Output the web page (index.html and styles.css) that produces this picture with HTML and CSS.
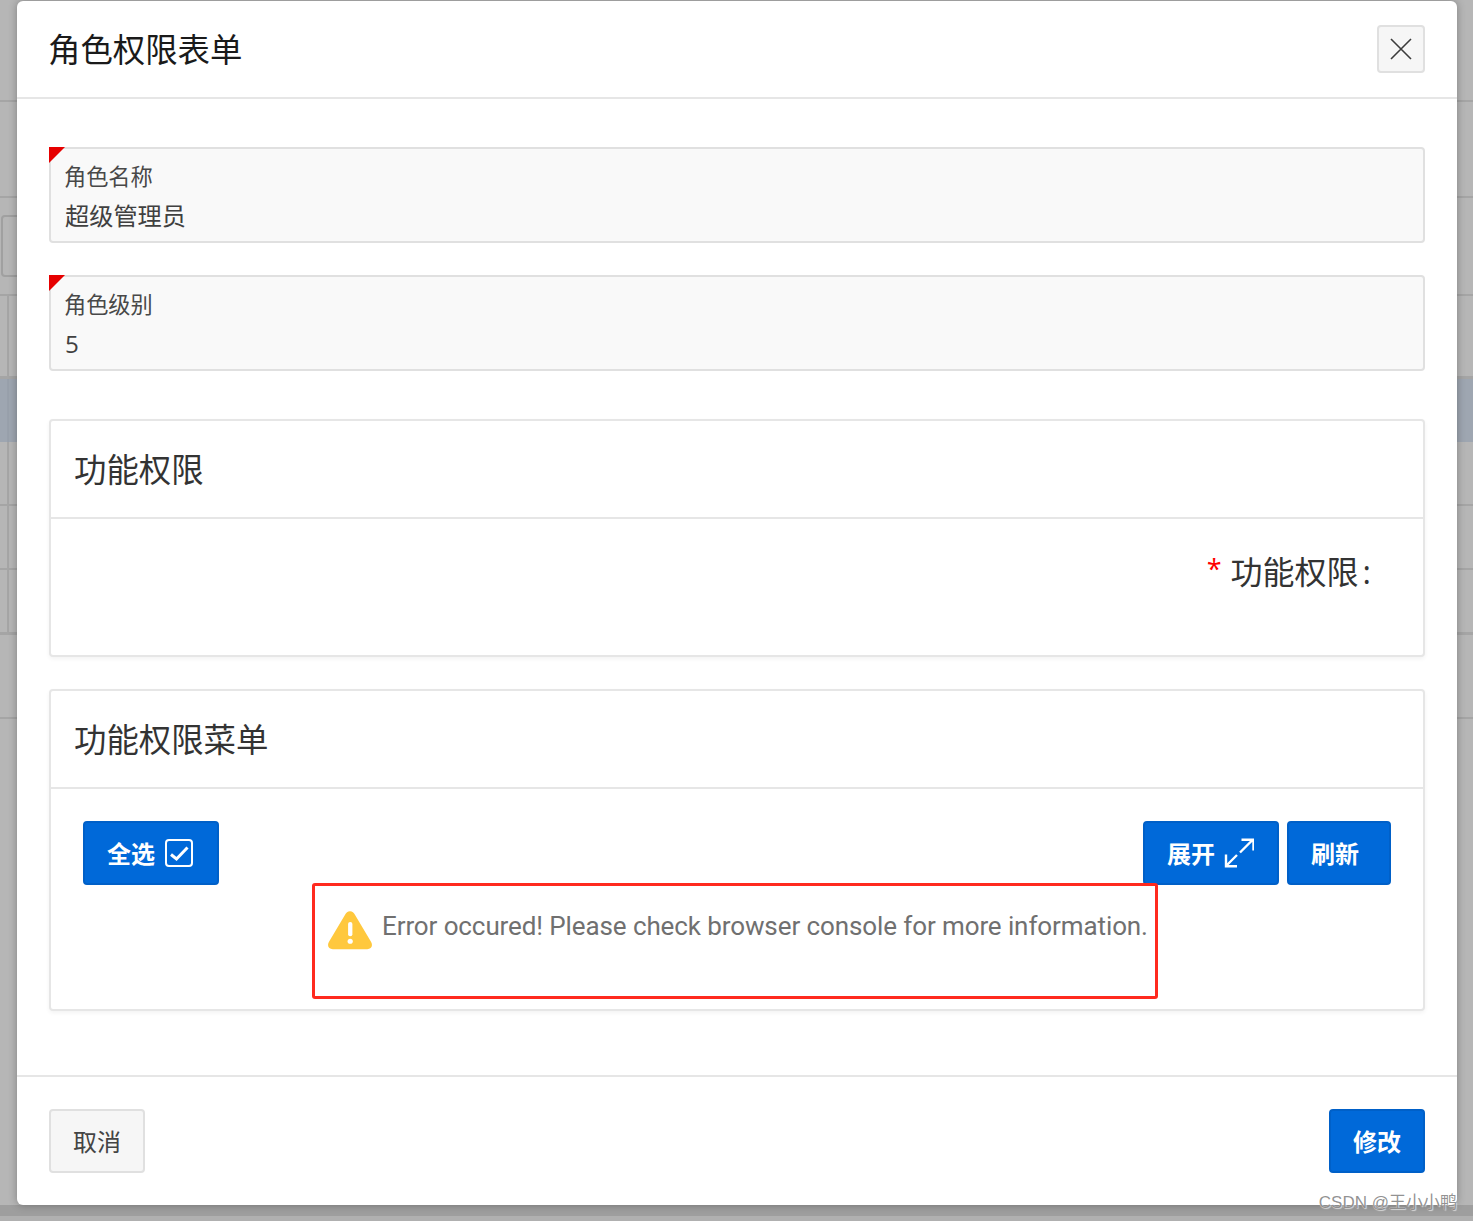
FILE: index.html
```html
<!DOCTYPE html>
<html lang="zh-CN">
<head>
<meta charset="utf-8">
<title>角色权限表单</title>
<link rel="stylesheet" href="styles.css">
</head>
<body>
<div class="backdrop">
  <div class="bd-row r1"></div>
  <div class="bd-row r2"></div>
  <div class="bd-row r3"><span class="bd-btn"></span></div>
  <div class="bd-row r4 cols"></div>
  <div class="bd-row r5 band"></div>
  <div class="bd-row r6 cols"></div>
  <div class="bd-row r6 cols"></div>
  <div class="bd-row r7 cols"></div>
  <div class="bd-row r8"></div>
  <div class="bd-row r9"></div>
</div>
<main class="modal">
  <header class="modal-head">
    <h1 class="modal-title">角色权限表单</h1>
    <button class="close" type="button" aria-label="关闭">
      <svg width="22" height="22" viewBox="0 0 22 22"><path d="M1 1 21 21M21 1 1 21" fill="none" stroke="#3c3c3c" stroke-width="1.6"/></svg>
    </button>
  </header>
  <section class="modal-body">
    <div class="field">
      <label class="field-label">角色名称</label>
      <div class="field-value">超级管理员</div>
    </div>
    <div class="field">
      <label class="field-label">角色级别</label>
      <div class="field-value">5</div>
    </div>
    <div class="card card-a">
      <div class="card-head">功能权限</div>
      <div class="card-body form-row">
        <span class="req">*</span><span class="form-label">功能权限</span><span class="colon">:</span>
      </div>
    </div>
    <div class="card card-b">
      <div class="card-head">功能权限菜单</div>
      <div class="card-body">
        <div class="toolbar">
          <button class="btn primary btn-tool btn-select" type="button">全选
            <svg class="ico ico-check" width="28" height="28" viewBox="0 0 28 28"><rect x="1" y="1" width="26" height="26" rx="3" fill="none" stroke="#fff" stroke-width="2"/><path d="M6 15.500 11.500 20 22.500 8.500" fill="none" stroke="#fff" stroke-width="3"/></svg>
          </button>
          <div class="toolbar-right">
            <button class="btn primary btn-tool btn-expand" type="button">展开
              <svg class="ico ico-expand" width="30" height="30" viewBox="0 0 30 30"><path d="M16 14.500 28.500 2M17.500 1.800H29.500V12.500M2 28 13 17M2 16.500V28.200H13" fill="none" stroke="#fff" stroke-width="2.400"/></svg>
            </button>
            <button class="btn primary btn-tool btn-refresh" type="button">刷新</button>
          </div>
        </div>
        <div class="error">
          <svg class="warn" width="44" height="39" viewBox="0 0 46 40"><path d="M23 0C20.500 0 19 1.500 18 3.200L1.200 31.500C-1.500 36 .8 39.500 5 39.500H41C45.200 39.500 47.500 36 44.800 31.500L28 3.200C27 1.500 25.500 0 23 0Z" fill="#ffc83d"/><rect x="21" y="11" width="4.500" height="15" rx="2.200" fill="#fff"/><circle cx="23.200" cy="31.200" r="2.700" fill="#fff"/></svg>
          <span class="error-text">Error occured! Please check browser console for more information.</span>
        </div>
      </div>
    </div>
  </section>
  <footer class="modal-foot">
    <button class="btn default" type="button">取消</button>
    <button class="btn primary" type="button">修改</button>
  </footer>
</main>
<div class="watermark">CSDN @王小小鸭</div>
</body>
</html>
```
FILE: styles.css
```css
* { box-sizing: border-box; }
html, body { margin: 0; height: 1221px; overflow: hidden; }
body {
  position: relative;
  width: 1473px;
  background: #b6b6b6;
  padding: 1px 16px 0 17px;
  font-family: "Open Sans", "Noto Sans CJK SC", sans-serif;
  color: #333;
}
.backdrop { position: absolute; inset: 0; display: flex; flex-direction: column; }
.bd-row { border-bottom: 2px solid #a5a5a5; position: relative; }
.r1 { height: 102px; }
.r2 { height: 96px; }
.r3 { height: 98px; }
.r4 { height: 80px; border-bottom-width: 0; }
.r5 { height: 66px; background: #9ea6b1; border-bottom: 0; border-top: 3px solid #a5a5a5; }
.r6 { height: 64px; }
.r7 { height: 65px; border-bottom-width: 3px; }
.r8 { height: 84px; }
.r9 { flex: 1; border-bottom: 0; background: linear-gradient(#b6b6b6 0 486px, #9e9e9e 486px 497px, #b0b0b0 497px); }
.cols { background: linear-gradient(90deg, transparent 7px, #a5a5a5 7px 9px, transparent 9px); }
.band { background: linear-gradient(90deg, #9ea6b1 7px, #98a0ab 7px 9px, #9ea6b1 9px); }
.bd-btn {
  position: absolute; left: 1px; top: 17px; width: 30px; height: 62px;
  border: 2px solid #a0a0a0; border-radius: 4px;
}
.modal {
  position: relative;
  width: 1440px;
  height: 1204px;
  background: #fff;
  border-radius: 6px;
  display: flex;
  flex-direction: column;
  box-shadow: 0 0 8px rgba(0,0,0,.3);
}
.modal-head {
  height: 98px;
  padding: 0 32px;
  display: flex;
  align-items: center;
  justify-content: space-between;
  border-bottom: 2px solid #e6e6e6;
}
.modal-title { margin: 0 0 0 -1px; font-size: 32.4px; font-weight: 400; color: #1a1a1a; line-height: 96px; }
.close {
  width: 48px; height: 48px;
  padding: 0;
  display: flex; align-items: center; justify-content: center;
  background: #f6f6f6;
  border: 2px solid #e0e0e0;
  border-radius: 4px;
}
.modal-body { flex: 1; padding: 48px 32px 0; }
.field {
  position: relative;
  height: 96px;
  margin-bottom: 32px;
  padding: 12px 14px 0;
  background: #f9f9f9;
  border: 2px solid #e0e0e0;
  border-radius: 4px;
}
.field::before {
  content: "";
  position: absolute;
  left: -2px; top: -2px;
  border-style: solid;
  border-width: 16px 16px 0 0;
  border-color: #e60000 transparent transparent transparent;
}
.field-label { display: block; margin-left: -1px; font-size: 22.2px; line-height: 32px; color: #484848; }
.field-value { margin-top: 1px; font-size: 24.2px; line-height: 44px; color: #404040; }
.card {
  border: 2px solid #e6e6e6;
  border-radius: 4px;
  background: #fff;
  box-shadow: 0 2px 4px rgba(0,0,0,.05);
}
.card-a { height: 238px; margin: 48px 0 32px; }
.card-b { height: 322px; }
.card-head {
  height: 98px;
  padding: 0 23px 4px;
  display: flex;
  align-items: center;
  font-size: 32.4px;
  color: #333;
  border-bottom: 2px solid #e6e6e6;
}
.form-row {
  display: flex;
  justify-content: flex-end;
  align-items: flex-start;
  padding: 29px 52px 0 0;
  font-size: 32px;
  line-height: 48px;
}
.req { color: #f00; font-size: 27px; line-height: 42px; margin-right: 9px; }
.form-label { color: #333; }
.colon { margin-left: 4px; }
.card-b .card-body { position: relative; padding: 32px 32px 0; }
.toolbar { display: flex; justify-content: space-between; }
.toolbar-right { display: flex; gap: 8px; }
.btn {
  height: 64px;
  padding: 0 0 2px;
  display: inline-flex;
  align-items: center;
  justify-content: center;
  font-family: inherit;
  font-size: 24px;
  border-radius: 4px;
  border: 2px solid transparent;
}
.primary { background: #0069d9; border-color: #0060c8; color: #fff; font-weight: 700; }
.default { background: #f6f6f6; border-color: #e0e0e0; color: #444; }
.btn-tool { justify-content: flex-start; padding-left: 22px; }
.ico { margin-top: 2px; }
.ico-check { margin-left: 10px; }
.ico-expand { margin-left: 9px; }
.btn-select { width: 136px; }
.btn-expand { width: 136px; }
.btn-refresh { width: 104px; }
.error {
  position: absolute;
  left: 261px; top: 94px;
  width: 846px; height: 116px;
  border: 3px solid #ff2a1f;
  border-radius: 3px;
  padding: 25px 0 0 13px;
  display: flex;
  align-items: flex-start;
  gap: 10px;
  background: #fff;
  white-space: nowrap;
}
.warn { flex: none; }
.error-text {
  font-family: Roboto, sans-serif;
  font-size: 26px;
  line-height: 30px;
  letter-spacing: -.1px;
  color: #707070;
}
.modal-foot {
  height: 130px;
  padding: 32px 32px 0;
  display: flex;
  justify-content: space-between;
  align-items: flex-start;
  border-top: 2px solid #e6e6e6;
}
.modal-foot .btn { width: 96px; }
.watermark {
  position: absolute;
  right: 16px; bottom: 8px;
  font-family: "Liberation Sans", "Noto Sans CJK SC", sans-serif;
  font-size: 17px;
  line-height: 20px;
  color: rgba(110,110,110,.75);
  text-shadow: 0 0 1px #fff, 1px 1px 1px rgba(255,255,255,.6);
}
```
